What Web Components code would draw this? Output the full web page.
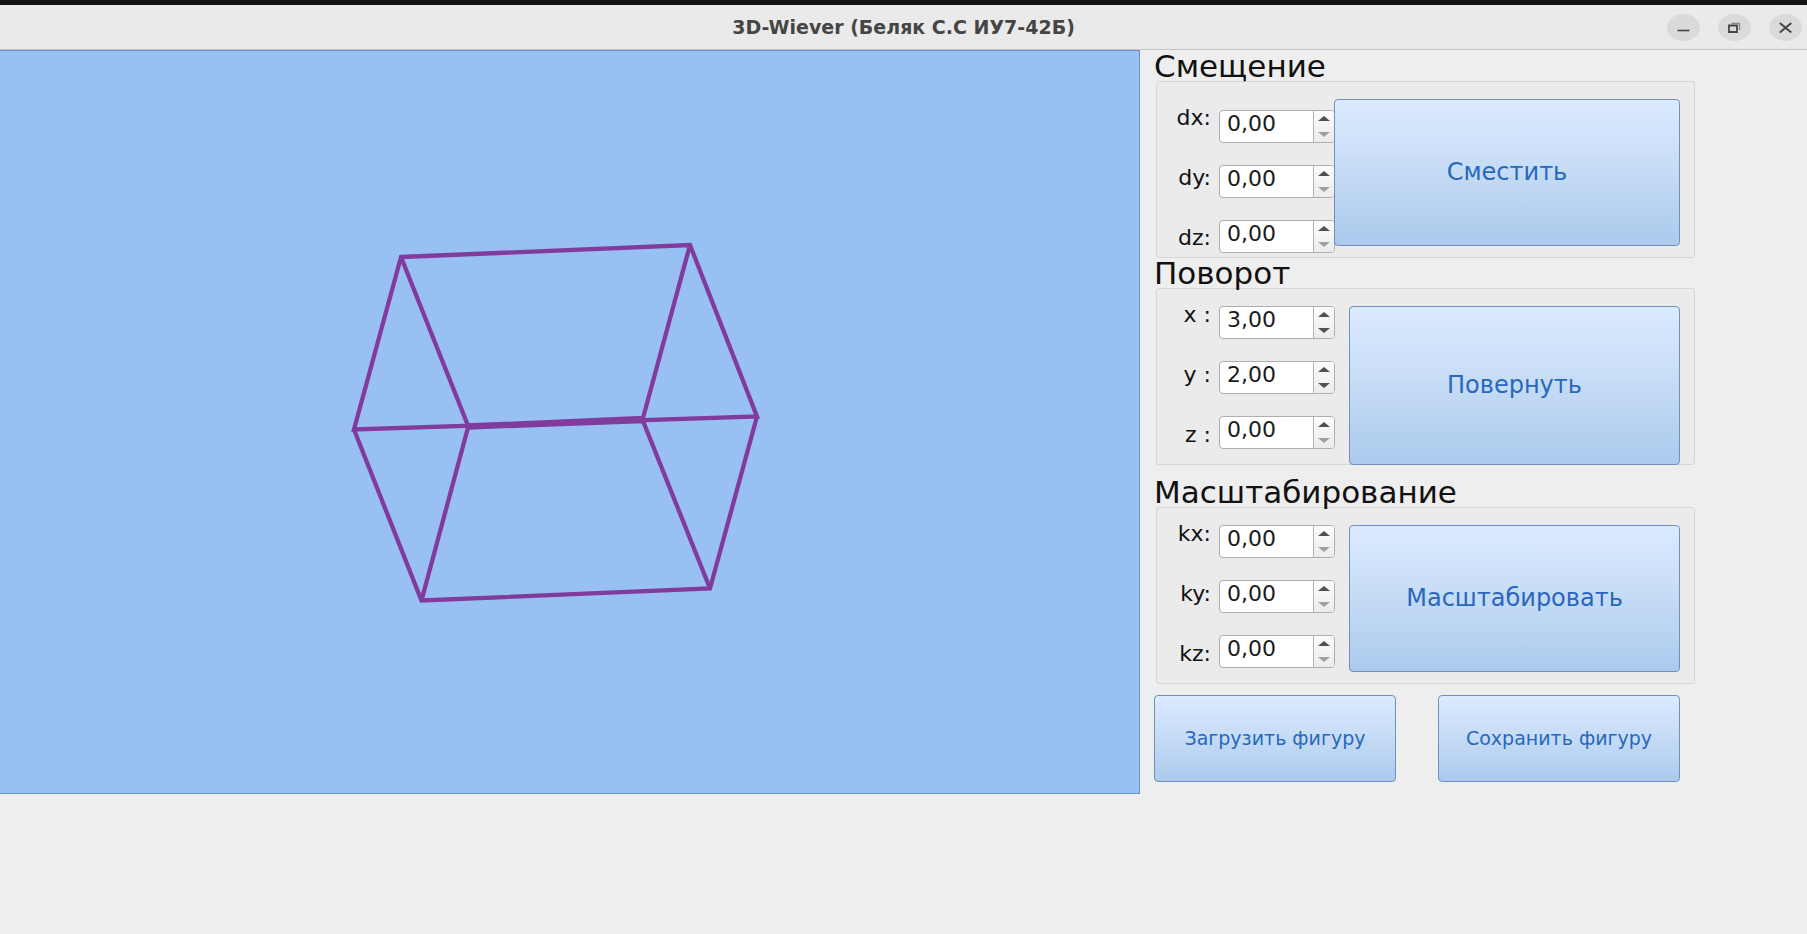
<!DOCTYPE html>
<html lang="ru">
<head>
<meta charset="utf-8">
<title>3D-Wiever</title>
<style>
html, body { height: 100%; }
body { margin: 0; background: #eeeeee; overflow: hidden; }
</style>
</head>
<body>
<viewer-window></viewer-window>
<script>
class TitleBar extends HTMLElement {
  constructor() {
    super();
    this.attachShadow({ mode: 'open' }).innerHTML = `
<style>
:host { display: grid; grid-template-columns: 1fr auto 1fr; align-items: center; height: 44px; border-top: 5px solid #131313; border-bottom: 1px solid #c2c2c2; background: #eaeaea; font: bold 19px "DejaVu Sans", sans-serif; color: #454545; }
h1 { grid-column: 2; margin: 0; font: inherit; white-space: nowrap; }
nav { display: flex; justify-content: flex-end; gap: 18px; padding-right: 5px; }
button { width: 33px; height: 27px; padding: 0; border: 0; border-radius: 50%; background: #dadada; display: grid; place-items: center; }
svg { display: block; }
</style>
<h1><slot></slot></h1>
<nav>
<button aria-label="Свернуть"><svg width="33" height="27" fill="none" stroke="#454545" stroke-width="1.6"><path d="M10.500 16.500h12"/></svg></button>
<button aria-label="Восстановить"><svg width="33" height="27" fill="none" stroke="#454545"><path d="M11 11.500h8v6.500h-8z" stroke-width="1.8"/><path d="M13.500 9.500h8v6.500" stroke="#858585" stroke-width="1.3"/></svg></button>
<button aria-label="Закрыть"><svg width="33" height="27" fill="none" stroke="#454545" stroke-width="2"><path d="M10.800 9l11.500 9.500M22.300 9l-11.500 9.500"/></svg></button>
</nav>`;
  }
}
customElements.define('title-bar', TitleBar);

class SceneView extends HTMLElement {
  constructor() {
    super();
    this.attachShadow({ mode: 'open' }).innerHTML = `
<style>
:host { display: block; box-sizing: border-box; height: 744px; border: 1px solid #6f93c0; border-left: 0; background: #99c0f3; overflow: hidden; }
svg { display: block; width: 100%; height: 100%; }
</style>
<svg viewBox="0 51 1139 742" preserveAspectRatio="xMinYMin meet" fill="none" stroke="#813b9d" stroke-width="4.300" stroke-linejoin="miter" role="img" aria-label="Каркас куба">
<path d="M401 257L690 245L757 416.500L354 429.500Z"/>
<path d="M401 257L468 425.500L643 418L690 245"/>
<path d="M354 429.500L421.500 600.500L710 588.500L757 416.500"/>
<path d="M421.500 600.500L468 427.500L643 421L710 588.500"/>
</svg>`;
  }
}
customElements.define('scene-view', SceneView);

class ActionButton extends HTMLElement {
  constructor() {
    super();
    this.attachShadow({ mode: 'open' }).innerHTML = `
<style>
:host { display: block; }
button { box-sizing: border-box; width: 100%; height: 100%; padding: 0 0 2px; border: 1px solid #7092ba; border-radius: 4px; background: linear-gradient(#dbeaff, #cbdff7 38%, #abcaed); color: #2768bd; font: inherit; white-space: nowrap; }
</style>
<button type="button"><slot></slot></button>`;
  }
}
customElements.define('action-button', ActionButton);

class TransformGroup extends HTMLElement {
  connectedCallback() {
    const names = this.getAttribute('axes').split(',');
    const values = this.getAttribute('values').split(',');
    const labels = names.map((n, i) => `<label for="v${i}">${n}</label>`).join('');
    const spins = values.map((v, i) => `<div class="spin"><input id="v${i}" type="text" inputmode="decimal" value="${v},00"><div class="steps">
<button type="button" aria-label="Больше"><svg width="12" height="5"><path d="M0 5L6 0L12 5z"/></svg></button>
<button type="button" aria-label="Меньше" ${v === '0' ? 'disabled' : ''}><svg width="12" height="5"><path d="M0 0L6 5L12 0z"/></svg></button></div></div>`).join('');
    this.attachShadow({ mode: 'open' }).innerHTML = `
<style>
:host { display: block; font-family: "DejaVu Sans", sans-serif; color: #111; }
h2 { margin: 0; font-size: 31px; line-height: 30px; font-weight: 400; }
.box { box-sizing: border-box; height: 177px; margin-left: 2px; padding: 17px 14px 0 0; border: 1px solid #d6d6d6; border-radius: 3px; background: #ebebeb; display: grid; grid-template-columns: 54px 115px 1fr; }
.labels { display: flex; flex-direction: column; margin-top: var(--label-shift, -6px); }
label { height: 60px; line-height: 30px; text-align: right; white-space: pre; font-size: 22px; }
.spins { display: flex; flex-direction: column; gap: 22px; margin: var(--spin-shift, 0) -8px 0 8px; }
.spin { box-sizing: border-box; width: 116px; height: 33px; border: 1px solid #aeaeae; border-radius: 4px; background: #fff; display: flex; overflow: hidden; }
input { flex: 1; min-width: 0; margin: 0; border: 0; outline: 0; padding: 0 0 6px 7px; background: none; color: #1c1c1c; font: 22px "DejaVu Sans", sans-serif; }
.steps { width: 20px; border-left: 1px solid #b4b4b4; background: linear-gradient(#fcfcfc, #ececec); display: flex; flex-direction: column; }
.steps button { flex: 1; display: grid; place-items: center; padding: 0; border: 0; background: none; fill: #505050; }
.steps button:disabled { fill: #a0a0a0; }
action-button { position: relative; height: var(--button-height, 147px); margin-left: var(--button-inset, 23px); font-size: 24px; }
</style>
<h2><slot name="title"></slot></h2>
<div class="box"><div class="labels">${labels}</div><div class="spins">${spins}</div><action-button><slot></slot></action-button></div>`;
  }
}
customElements.define('transform-group', TransformGroup);

class ViewerWindow extends HTMLElement {
  constructor() {
    super();
    this.attachShadow({ mode: 'open' }).innerHTML = `
<style>
:host { display: block; font-family: "DejaVu Sans", sans-serif; }
main { display: grid; grid-template-columns: minmax(0, 1fr) 541px 98px; column-gap: 14px; align-items: start; }
.controls { padding-top: 1px; }
.move { --label-shift: 4px; --spin-shift: 11px; --button-inset: 8px; }
.turn { --button-height: 159px; }
.scale { margin-top: 12px; }
.files { display: grid; grid-template-columns: 242px 242px; justify-content: space-between; padding: 11px 15px 0 0; font-size: 19px; }
.files action-button { height: 87px; }
</style>
<title-bar>3D-Wiever (Беляк С.С ИУ7-42Б)</title-bar>
<main>
<scene-view></scene-view>
<div class="controls">
<transform-group class="move" axes="dx:,dy:,dz:" values="0,0,0"><span slot="title">Смещение</span>Сместить</transform-group>
<transform-group class="turn" axes="x :,y :,z :" values="3,2,0"><span slot="title">Поворот</span>Повернуть</transform-group>
<transform-group class="scale" axes="kx:,ky:,kz:" values="0,0,0"><span slot="title">Масштабирование</span>Масштабировать</transform-group>
<div class="files"><action-button>Загрузить фигуру</action-button><action-button>Сохранить фигуру</action-button></div>
</div>
</main>`;
  }
}
customElements.define('viewer-window', ViewerWindow);
</script>
</body>
</html>
